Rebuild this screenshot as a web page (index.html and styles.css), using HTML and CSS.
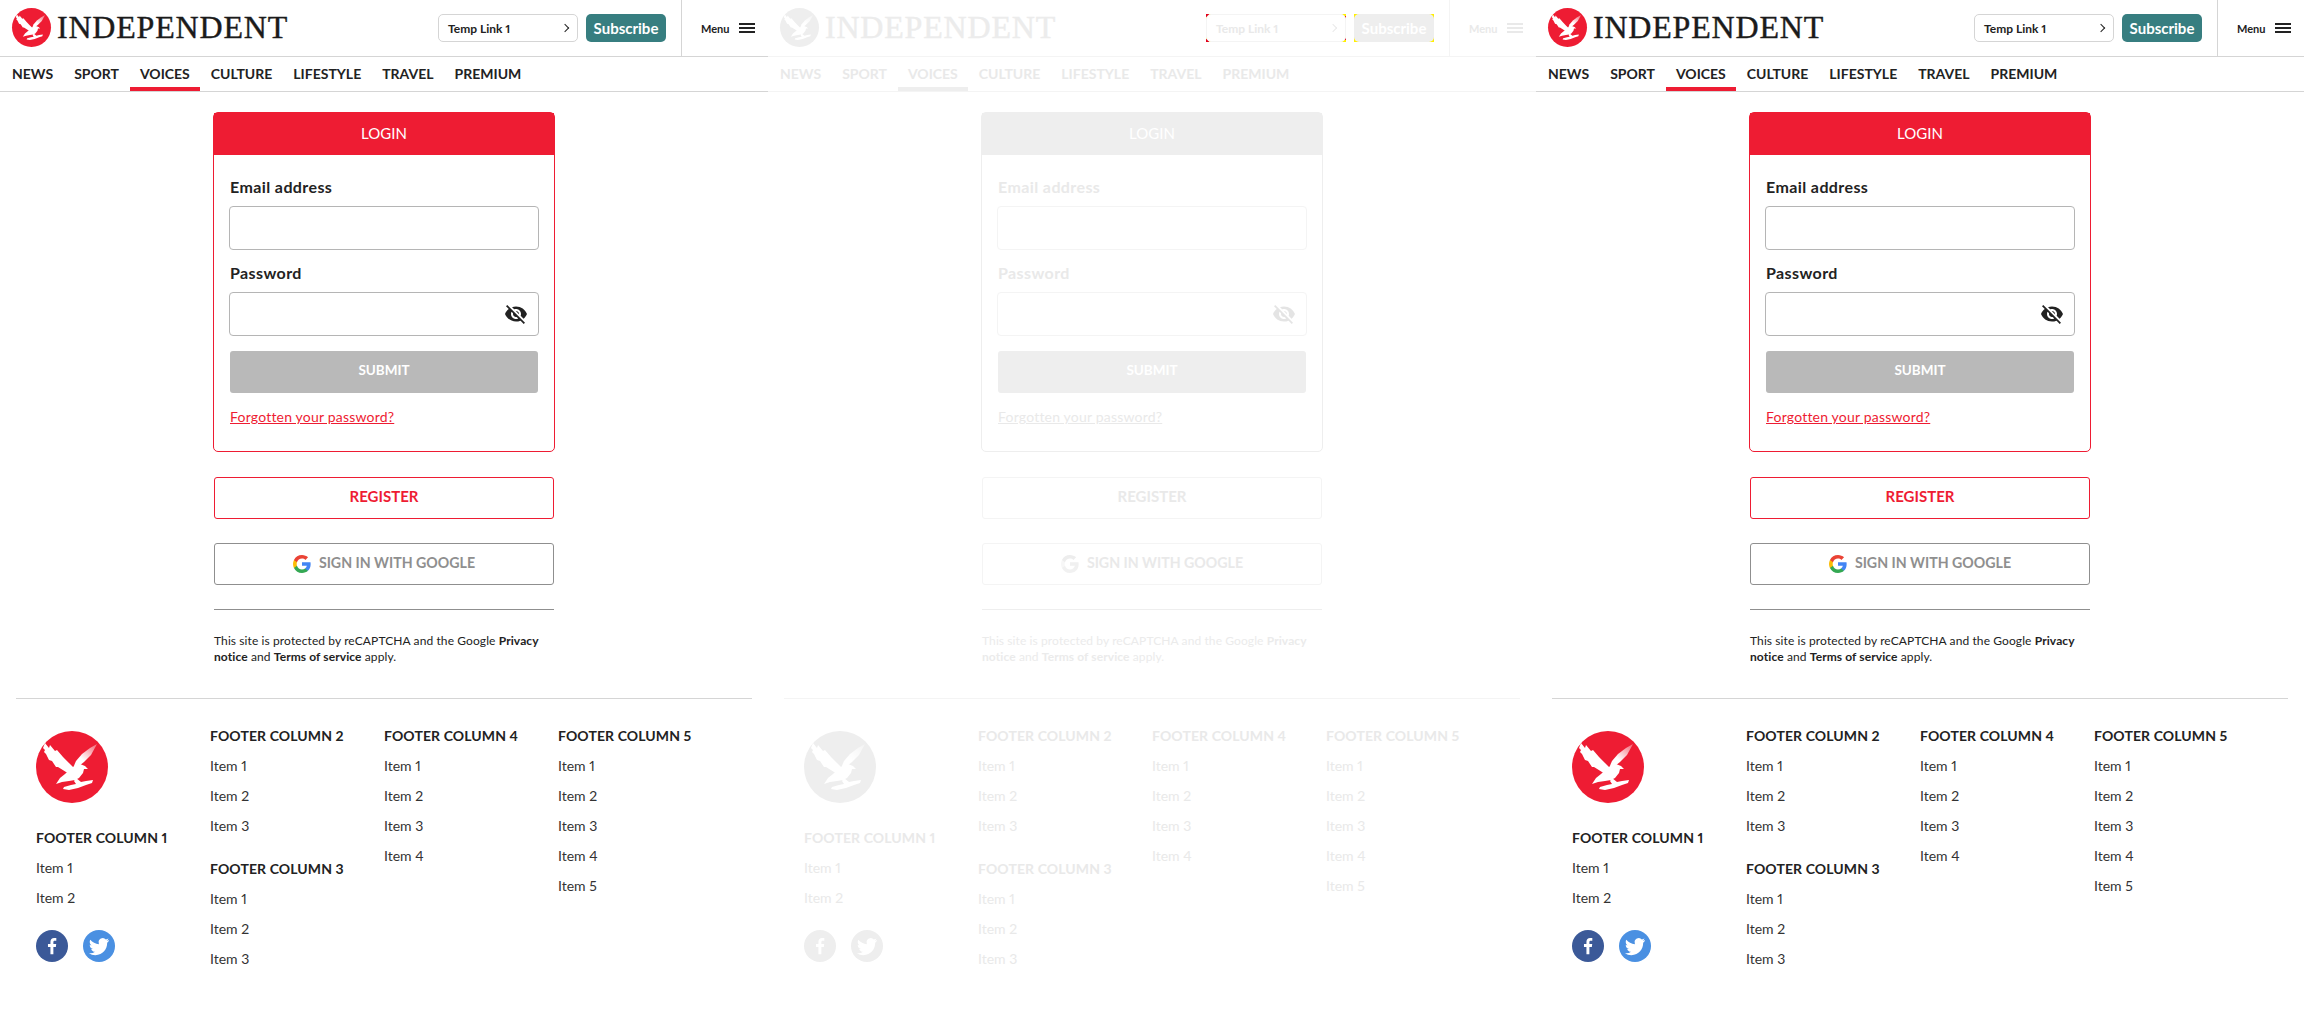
FILE: index.html
```html
<!DOCTYPE html>
<html lang="en">
<head>
  <meta charset="UTF-8">
  <title>Independent - Login</title>
  <link rel="stylesheet" href="styles.css">
</head>
<body>
  <svg class="defs" width="0" height="0" aria-hidden="true">
    <defs>
      <linearGradient id="wing-fade" x1="0.1" y1="1" x2="0.95" y2="0">
        <stop offset="0.35" stop-color="#fff"/>
        <stop offset="1" stop-color="#fff" stop-opacity="0.35"/>
      </linearGradient>
    </defs>
    <symbol id="eagle" viewBox="0 0 72 72">
      <path fill="#fff" d="M9 12L13 17 14 14 19 20 21 19 27 26 34 33 38 37 37 44 30 41 22 36 20 36 16 30 13 29 10 23 8 21 9 19 7 17z"/>
      <path fill="url(#wing-fade)" d="M61 13L55 24 48 31 43 35 37 37 40 30 46 23 54 17z"/>
      <path fill="#fff" d="M37 36L44 33 49 35 52 38 48 38 47 42 43 47 39 49 33 50 26 51 20 53 24 47 29 43 32 40z"/>
      <path fill="#fff" d="M40 47L45 51 50 50 57 49 56 52 50 54 42 57 33 59 27 58 28 56 35 54 40 53 38 50z"/>
    </symbol>
    <symbol id="eye-off" viewBox="0 0 24 24">
      <path fill="#222" d="M12 7c2.760 0 5 2.240 5 5 0 .65-.13 1.260-.36 1.830l2.920 2.920c1.510-1.260 2.700-2.890 3.430-4.750C21.260 7.610 17 4.500 12 4.500c-1.400 0-2.740.25-3.980.7l2.160 2.160C10.740 7.130 11.350 7 12 7zM2 4.270l2.280 2.280.46.460C3.080 8.300 1.780 10.020 1 12c1.730 4.390 6 7.500 11 7.500 1.550 0 3.030-.3 4.380-.84l.42.420L19.730 22 21 20.730 3.270 3 2 4.270zM7.530 9.800l1.550 1.550c-.05.210-.08.430-.08.650 0 1.660 1.340 3 3 3 .22 0 .44-.03.650-.08l1.550 1.550c-.67.330-1.410.53-2.200.53-2.760 0-5-2.240-5-5 0-.79.200-1.530.53-2.200zm4.310-.78l3.150 3.150.02-.16c0-1.660-1.340-3-3-3l-.17.010z"/>
    </symbol>
    <symbol id="google" viewBox="0 0 18 18">
      <path fill="#4285f4" d="M17.640 9.200c0-.64-.06-1.250-.16-1.840H9v3.480h4.840a4.140 4.140 0 0 1-1.800 2.720v2.260h2.920c1.700-1.570 2.680-3.880 2.680-6.620z"/>
      <path fill="#34a853" d="M9 18c2.430 0 4.470-.8 5.960-2.180l-2.920-2.260c-.8.540-1.830.86-3.040.86-2.340 0-4.330-1.580-5.040-3.710H.96v2.340A9 9 0 0 0 9 18z"/>
      <path fill="#fbbc05" d="M3.960 10.710A5.400 5.400 0 0 1 3.680 9c0-.59.100-1.170.28-1.710V4.950H.96A9 9 0 0 0 0 9c0 1.450.35 2.830.96 4.050l3-2.340z"/>
      <path fill="#ea4335" d="M9 3.580c1.320 0 2.510.45 3.440 1.350l2.580-2.590C13.460.89 11.430 0 9 0A9 9 0 0 0 .96 4.950l3 2.340C4.670 5.160 6.660 3.580 9 3.580z"/>
    </symbol>
    <symbol id="facebook" viewBox="0 0 24 24">
      <path fill="#fff" d="M13.500 21v-8h2.700l.4-3.200h-3.100V7.800c0-.9.300-1.500 1.600-1.500h1.600V3.400c-.3 0-1.300-.1-2.400-.1-2.400 0-4 1.400-4 4.100v2.400H7.600V13h2.700v8z"/>
    </symbol>
    <symbol id="twitter" viewBox="0 0 24 24">
      <path fill="#fff" d="M23 5.500c-.8.400-1.700.6-2.600.7.900-.6 1.600-1.400 2-2.500-.9.500-1.800.9-2.900 1.100A4.500 4.500 0 0 0 11.800 9c0 .4 0 .7.100 1C8.200 9.800 4.800 8 2.500 5.200c-.4.700-.6 1.400-.6 2.300 0 1.600.8 3 2 3.800-.7 0-1.400-.2-2-.6v.1c0 2.200 1.600 4 3.600 4.400-.4.100-.8.200-1.200.2-.3 0-.6 0-.8-.1.600 1.800 2.200 3.100 4.200 3.100A9 9 0 0 1 1 19.900 12.800 12.800 0 0 0 8 22c8.300 0 12.900-6.900 12.900-12.900v-.6c.9-.6 1.600-1.400 2.100-3z"/>
    </symbol>
  </svg>

  <div class="screens">
    <div class="screen" data-screen>
      <header class="masthead">
        <a class="brand" href="#">
          <span class="brand-mark"><svg><use href="#eagle"/></svg></span>
          <span class="brand-name">INDEPENDENT</span>
        </a>
        <div class="masthead-actions">
          <a class="temp-link" href="#">Temp Link 1 <span class="chevron"></span></a>
          <a class="subscribe" href="#">Subscribe</a>
        </div>
        <a class="menu" href="#">Menu <span class="burger"><i></i><i></i><i></i></span></a>
      </header>

      <nav class="nav">
        <a href="#">NEWS</a>
        <a href="#">SPORT</a>
        <a class="active" href="#">VOICES</a>
        <a href="#">CULTURE</a>
        <a href="#">LIFESTYLE</a>
        <a href="#">TRAVEL</a>
        <a href="#">PREMIUM</a>
      </nav>

      <main class="content">
        <form class="login-card">
          <h2>LOGIN</h2>
          <div class="login-body">
            <label>Email address</label>
            <div class="field"></div>
            <label>Password</label>
            <div class="field"><svg class="eye"><use href="#eye-off"/></svg></div>
            <div class="submit">SUBMIT</div>
            <a class="forgot" href="#">Forgotten your password?</a>
          </div>
        </form>
        <a class="btn btn-register" href="#">REGISTER</a>
        <a class="btn btn-google" href="#"><svg class="g-icon"><use href="#google"/></svg><span>SIGN IN WITH GOOGLE</span></a>
        <p class="recaptcha">This site is protected by reCAPTCHA and the Google <b>Privacy</b> <b>notice</b> and <b>Terms of service</b> apply.</p>
      </main>

      <footer class="footer">
        <div class="footer-col">
          <span class="footer-logo"><svg><use href="#eagle"/></svg></span>
          <h3>FOOTER COLUMN 1</h3>
          <a href="#">Item 1</a>
          <a href="#">Item 2</a>
          <div class="social">
            <span class="fb"><svg><use href="#facebook"/></svg></span>
            <span class="tw"><svg><use href="#twitter"/></svg></span>
          </div>
        </div>
        <div class="footer-col">
          <h3>FOOTER COLUMN 2</h3>
          <a href="#">Item 1</a>
          <a href="#">Item 2</a>
          <a href="#">Item 3</a>
          <h3 class="second">FOOTER COLUMN 3</h3>
          <a href="#">Item 1</a>
          <a href="#">Item 2</a>
          <a href="#">Item 3</a>
        </div>
        <div class="footer-col">
          <h3>FOOTER COLUMN 4</h3>
          <a href="#">Item 1</a>
          <a href="#">Item 2</a>
          <a href="#">Item 3</a>
          <a href="#">Item 4</a>
        </div>
        <div class="footer-col">
          <h3>FOOTER COLUMN 5</h3>
          <a href="#">Item 1</a>
          <a href="#">Item 2</a>
          <a href="#">Item 3</a>
          <a href="#">Item 4</a>
          <a href="#">Item 5</a>
        </div>
      </footer>
    </div>
  </div>

  <script>
    // same page three times, the middle one is the loading state
    const screens = document.querySelector('.screens');
    const first = document.querySelector('[data-screen]');
    const loading = first.cloneNode(true);
    loading.classList.add('loading');
    screens.appendChild(loading);
    screens.appendChild(first.cloneNode(true));
  </script>
</body>
</html>
```

FILE: styles.css
```css
* {
  box-sizing: border-box;
}

html {
  background: white;
}

body {
  margin: 0;
  color: #222;
  font-family: Lato, Arial, sans-serif;
  font-variant-numeric: proportional-nums;
  overflow: hidden;
}

a {
  color: inherit;
  text-decoration: none;
}

.defs {
  position: absolute;
}

.screens {
  display: grid;
  grid-template-columns: repeat(3, 768px);
  height: 1029px;
}

.screen {
  height: 1029px;
}

/* masthead */
.masthead {
  display: flex;
  align-items: stretch;
  height: 57px;
  border-bottom: 1px solid #d5d5d5;
}

.brand {
  display: flex;
  align-items: flex-start;
  padding: 8px 0 0 12px;
  flex: 1;
}

.brand-mark {
  width: 39px;
  height: 39px;
  border-radius: 50%;
  background: #ee1c33;
  margin-right: 6px;
}

.brand-mark svg {
  display: block;
  width: 100%;
  height: 100%;
}

.brand-name {
  font-family: "Liberation Serif", serif;
  font-size: 32px;
  line-height: 39px;
  letter-spacing: 0.8px;
  color: #1b1b1b;
  -webkit-text-stroke: 0.4px #1b1b1b;
}

.masthead-actions {
  display: flex;
  align-items: center;
  gap: 8px;
  padding-right: 15px;
}

.temp-link {
  position: relative;
  display: flex;
  align-items: center;
  justify-content: space-between;
  width: 140px;
  height: 28px;
  padding: 0 9px;
  border: 1px solid #d5d5d5;
  border-radius: 5px;
  background: white;
  font-size: 12px;
  font-weight: 700;
}

.chevron {
  width: 6px;
  height: 6px;
  border-top: 1px solid #222;
  border-right: 1px solid #222;
  transform: rotate(45deg);
}

.subscribe {
  position: relative;
  display: flex;
  align-items: center;
  justify-content: center;
  width: 80px;
  height: 28px;
  border-radius: 5px;
  background: #377e80;
  color: white;
  font-size: 15px;
  font-weight: 700;
}

.menu {
  display: flex;
  align-items: center;
  gap: 9px;
  width: 87px;
  padding-left: 19px;
  border-left: 1px solid #d5d5d5;
  font-size: 11px;
  font-weight: 700;
}

.burger {
  display: flex;
  flex-direction: column;
  gap: 2px;
}

.burger i {
  display: block;
  width: 16px;
  height: 2px;
  background: #222;
}

/* nav */
.nav {
  display: flex;
  gap: 1px;
  height: 35px;
  padding-left: 2px;
  border-bottom: 1px solid #d5d5d5;
}

.nav a {
  height: 34px;
  padding: 8px 10px 0;
  font-size: 14px;
  font-weight: 700;
  line-height: 17px;
}

.nav .active {
  border-bottom: 4px solid #ee1c33;
}

/* login */
.content {
  width: 342px;
  margin: 20px auto 0 213px;
}

.login-card {
  display: block;
  height: 340px;
  border: 1px solid #ee1c33;
  border-radius: 5px;
}

.login-card h2 {
  margin: 0;
  height: 42px;
  background: #ee1c33;
  color: white;
  font-size: 15px;
  font-weight: 400;
  line-height: 40px;
  text-align: center;
}

.login-body {
  padding: 21px 15px 0;
}

.login-body label {
  display: block;
  height: 23px;
  margin-left: 1px;
  font-size: 16px;
  font-weight: 700;
  letter-spacing: 0.4px;
  line-height: 22px;
}

.field {
  display: flex;
  align-items: center;
  justify-content: flex-end;
  height: 44px;
  margin: 7px 0 12px;
  padding-right: 10px;
  border: 1px solid #b5b5b5;
  border-radius: 4px;
}

.eye {
  width: 24px;
  height: 24px;
}

.submit {
  height: 42px;
  margin: 15px 1px 0;
  border-radius: 3px;
  background: #b9b9b9;
  color: white;
  font-size: 13.5px;
  font-weight: 700;
  line-height: 38px;
  text-align: center;
}

.forgot {
  display: block;
  margin: 15px 1px 0;
  color: #ee1c33;
  font-size: 14px;
  letter-spacing: 0.2px;
  line-height: 18px;
  text-decoration: underline;
}

.btn {
  display: flex;
  align-items: center;
  justify-content: center;
  width: 340px;
  height: 42px;
  margin: 24px 0 0 1px;
  border: 1px solid;
  border-radius: 3px;
  font-size: 15px;
  font-weight: 700;
}

.btn-register {
  margin-top: 25px;
  padding-bottom: 4px;
  color: #ee1c33;
  border-color: #ee1c33;
}

.btn-google {
  color: #8f8f8f;
  border-color: #8f8f8f;
  font-size: 14.2px;
}

.btn-google span {
  margin-bottom: 4px;
}

.g-icon {
  width: 18px;
  height: 18px;
  margin-right: 8px;
}

.recaptcha {
  width: 340px;
  margin: 24px 0 0 1px;
  padding-top: 23px;
  border-top: 1px solid #8f8f8f;
  font-size: 12px;
  letter-spacing: 0.1px;
  line-height: 16px;
}

/* footer */
.footer {
  display: grid;
  grid-template-columns: repeat(4, 174px);
  margin: 33px 16px 0;
  padding: 25px 0 0 20px;
  border-top: 1px solid #d5d5d5;
}

.footer-col a {
  display: block;
  height: 30px;
  color: #333;
  font-size: 14px;
  line-height: 30px;
}

.footer-col h3 {
  margin: 0 0 3px;
  height: 24px;
  font-size: 14px;
  font-weight: 700;
  letter-spacing: 0.1px;
  line-height: 24px;
}

.footer-col h3.second {
  margin-top: 16px;
}

.footer-logo {
  display: block;
  width: 72px;
  height: 72px;
  margin: 7px 0 23px;
  border-radius: 50%;
  background: #ee1c33;
}

.footer-logo svg {
  display: block;
  width: 72px;
  height: 72px;
}

.social {
  display: flex;
  gap: 15px;
  margin-top: 17px;
}

.social span {
  display: flex;
  align-items: center;
  justify-content: center;
  width: 32px;
  height: 32px;
  border-radius: 50%;
}

.fb {
  background: #3b5998;
}

.tw {
  background: #4a90e2;
}

.fb svg,
.tw svg {
  width: 22px;
  height: 22px;
}

/* loading state, everything goes flat grey */
.loading,
.loading a,
.loading h3,
.loading label,
.loading .btn {
  color: #e9e9e9;
}

.loading .brand-name {
  color: #ececec;
  -webkit-text-stroke-color: #ececec;
}

.loading .brand-mark,
.loading .footer-logo,
.loading .subscribe,
.loading .submit,
.loading .login-card h2,
.loading .fb,
.loading .tw {
  background: #eee;
  color: white;
}

.loading .burger i {
  background: #e9e9e9;
}

.loading .chevron {
  border-color: #e9e9e9;
}

.loading .nav .active {
  border-bottom-color: #eee;
}

.loading .login-card,
.loading .btn,
.loading .field,
.loading .recaptcha,
.loading .temp-link,
.loading .masthead,
.loading .menu,
.loading .nav,
.loading .footer {
  border-color: #f4f4f4;
}

.loading .login-card {
  border-color: #eee;
}

.loading .recaptcha {
  color: #ebebeb;
  border-top-color: #eee;
}

.loading .eye,
.loading .g-icon {
  filter: grayscale(1) opacity(0.12);
}

/* the yellow and red corner marks on the two header buttons */
.loading .subscribe::before,
.loading .temp-link::before {
  content: "";
  position: absolute;
  inset: 0;
  z-index: -1;
  border: 2px solid #ffef00;
  -webkit-mask:
    linear-gradient(#000 0 0) 0 0 / 5px 5px no-repeat,
    linear-gradient(#000 0 0) 100% 0 / 5px 5px no-repeat,
    linear-gradient(#000 0 0) 0 100% / 5px 5px no-repeat,
    linear-gradient(#000 0 0) 100% 100% / 5px 5px no-repeat;
}

.loading .temp-link::before {
  inset: -1px;
}

.loading .temp-link::after {
  content: "";
  position: absolute;
  inset: -1px;
  z-index: -1;
  background:
    linear-gradient(#e0001b 0 0) 0 0 / 3px 3px no-repeat,
    linear-gradient(#e0001b 0 0) 0 100% / 3px 3px no-repeat,
    linear-gradient(#e0001b 0 0) 100% 2px / 1px 2px no-repeat,
    linear-gradient(#e0001b 0 0) 100% calc(100% - 2px) / 1px 2px no-repeat;
}
```
